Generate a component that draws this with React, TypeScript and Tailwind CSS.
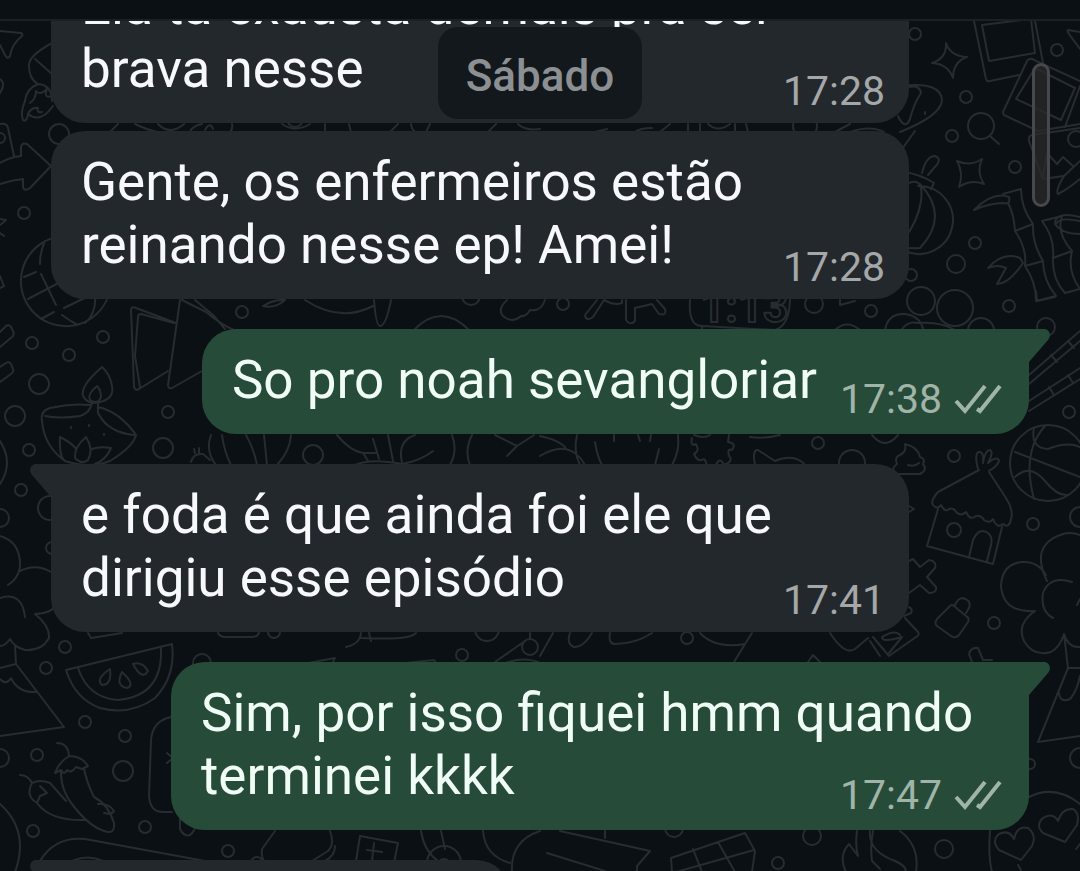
type Message = {
  id: number
  text: string
  time: string
  sent?: boolean
  tail?: boolean
  spaced?: boolean
}

const messages: Message[] = [
  { id: 1, text: 'Ela tá exausta demais pra ser brava nesse', time: '17:28' },
  { id: 2, text: 'Gente, os enfermeiros estão reinando nesse ep! Amei!', time: '17:28' },
  { id: 3, text: 'So pro noah sevangloriar', time: '17:38', sent: true, tail: true, spaced: true },
  { id: 4, text: 'e foda é que ainda foi ele que dirigiu esse episódio', time: '17:41', tail: true, spaced: true },
  { id: 5, text: 'Sim, por isso fiquei hmm quando terminei kkkk', time: '17:47', sent: true, tail: true, spaced: true },
]

// [cx, cy, r]
const dots = [
  [915, 33, 6], [966, 96, 6], [952, 135, 6], [1015, 166, 6], [1057, 49, 6], [975, 242, 6],
  [911, 274, 6], [956, 263, 9], [1009, 305, 6], [921, 300, 14], [955, 307, 18], [1076, 138, 8],
  [59, 133, 10], [0, 137, 5], [24, 212, 6], [32, 342, 6], [69, 354, 6], [39, 383, 10],
  [15, 415, 10], [29, 449, 6], [242, 311, 6], [103, 336, 6], [168, 411, 6], [163, 447, 10],
  [21, 489, 6], [0, 517, 9], [50, 507, 12], [52, 547, 6], [313, 454, 10], [563, 303, 6],
  [814, 303, 9], [871, 310, 6], [981, 330, 13], [1046, 326, 9], [1069, 411, 6], [954, 455, 6],
  [818, 442, 6], [852, 462, 13], [1033, 523, 6], [1080, 516, 10], [994, 622, 6], [954, 529, 7],
  [65, 646, 6], [46, 667, 6], [85, 721, 6], [125, 735, 6], [37, 754, 6], [0, 757, 9],
  [123, 770, 10], [33, 830, 6], [145, 826, 6], [228, 850, 6], [462, 654, 6], [530, 646, 8],
  [202, 662, 9], [687, 637, 6], [274, 631, 6], [1080, 757, 10], [1030, 763, 5], [944, 848, 9],
  [812, 835, 9], [778, 862, 6], [981, 125, 13], [487, 628, 12], [444, 862, 17],
  [444, 864, 6], [295, 118, 8], [674, 827, 9], [257, 862, 6], [805, 125, 12], [471, 295, 9],
]

const doodles = [
  // stars, magnifier
  'M946 42Q950 55 967 56Q953 61 953 77Q948 63 932 62Q947 57 946 42Z',
  'M957 160Q970 166 982 158Q976 171 984 183Q971 178 959 186Q964 172 957 160Z',
  'M990 135L999 143',
  // polaroids
  'M974 20L986 78Q987 81 990 80L1019 74M1035 20L1043 62M982 24L1031 18L1035 52L989 60Z',
  'M1080 80L1032 58Q1029 57 1027 60L1003 111Q1003 114 1006 115L1038 130L1080 123M1035 67L1075 87L1061 119L1016 98Z',
  'M1080 85L1065 126M1080 127L1032 134Q1028 135 1029 140L1043 178L1063 175M1043 175L1047 152L1057 163L1063 156L1073 165',
  'M1058 193Q1055 190 1064 175L1080 160M1058 193Q1068 188 1080 178M1080 31L1068 29Q1067 30 1069 33L1080 48',
  // guitar and bauble
  'M900 85Q942 80 942 100Q940 115 900 131M909 86Q920 84 921 92Q914 102 910 118Q905 130 898 115M915 130L902 148M925 111v2',
  'M918 185A34 34 0 1 1 905 250M920 183Q950 215 920 247Q912 248 900 246M909 182Q924 176 921 200Q918 220 904 238',
  'M900 170Q920 173 934 182L931 188M922 172Q926 155 935 155Q943 158 934 167L928 174',
  // bamboo
  'M1003 193L1021 188Q1021 207 1033 223Q1032 242 1043 260Q1043 279 1056 295L1036 300Q1036 281 1025 265Q1027 247 1015 230Q1014 213 1008 202M1015 230L1033 223M1025 265L1043 260',
  'M974 209Q993 190 1009 196Q1011 204 1003 202Q990 202 974 209ZM988 267Q1003 250 1020 257L1023 262Q1009 283 997 283L1006 267Q998 263 988 267Z',
  'M1042 220L1062 215Q1056 232 1072 250Q1067 270 1080 288M1042 220Q1055 237 1053 257Q1052 278 1065 292L1080 288M1053 257L1072 250M1080 216Q1055 210 1055 223Q1062 233 1080 233M1080 220Q1060 216 1057 222',
  // paper plane, rocket, tag, arrow
  'M0 30L21 32Q24 33 21 36Q12 43 10 55Q8 59 5 54L0 44M0 78Q6 82 0 92',
  'M52 42Q28 55 29 65Q29 78 38 83M35 58L52 73M38 83Q26 88 25 100Q20 112 23 119Q27 121 28 113Q40 123 53 105M38 83Q52 84 52 100M30 102Q36 98 36 90Q40 95 47 88Q43 98 52 95M28 113Q31 106 38 107Q36 112 42 111',
  'M0 123Q7 122 8 127L14 155M0 162Q10 156 21 155V146Q22 141 27 143L51 165L30 187Q24 191 23 186V178Q12 179 0 183',
  'M0 218L6 219L0 224M0 232L4 235M0 275L4 285L0 287',
  // globe
  'M57 236A45 45 0 1 0 108 296M40 263Q40 250 45 240M36 271L24 276M28 298L70 276M41 273L56 304M54 311L41 318M64 307L95 292M62 314Q70 320 78 324M95 292Q97 312 85 322',
  // chalk sticks
  'M0 331L6 325Q9 323 11 326L13 330Q15 333 12 336L0 346M0 366L6 362Q9 360 11 363L13 368Q14 371 11 373L0 381',
  // folded card
  'M176 322L136 307Q131 305 131 309L134 386Q135 390 139 388L168 370M174 322L141 313Q138 313 138 316L135 355L140 386',
  'M180 299L168 384Q168 388 172 387L202 370M182 299L206 311Q220 323 234 329M195 299L213 314L225 328',
  // oil lamp
  'M102 366Q80 385 83 395Q87 402 94 402Q115 400 112 385Q110 373 102 366ZM97 385Q87 393 90 399Q98 404 101 396Q101 389 97 385Z',
  'M92 402Q90 412 80 415Q60 418 45 415M90 404Q70 402 50 407Q40 410 42 420Q44 445 65 460Q90 468 110 460Q133 446 136 434Q120 411 98 406L98 412Q108 432 135 434M98 402V410',
  'M60 436Q72 442 76 448M60 436Q59 456 65 460M86 436Q74 446 75 457Q82 464 88 459Q94 448 86 436M92 448Q100 445 111 447Q106 459 95 463M71 426v1M89 424v1M104 433v1',
  // between the rows
  'M110 131L118 123M135 123Q150 130 158 131M158 123Q170 135 184 123M190 131Q192 125 202 123M205 129Q210 120 213 128M232 123Q233 128 230 131M282 123Q295 132 310 123M325 123V131M349 123L351 131M390 131L398 123M411 123Q412 130 416 131M430 123L426 131M488 131L496 123M518 123Q525 130 540 128',
  'M595 131L607 128M635 131Q640 127 652 127M660 131L670 123M688 123V131M700 123V131M708 123Q718 132 730 123M735 123V131M746 123L748 131M835 131L850 123M850 131Q870 124 884 131',
  'M263 305Q275 298 285 299M263 305Q275 308 285 299M305 299Q340 322 373 305M374 299Q376 325 380 325Q386 325 391 299M413 330Q441 300 470 330',
  'M507 299Q497 308 503 315Q512 323 521 315Q526 316 530 309Q541 311 545 299',
  'M597 299L585 314Q586 321 593 316L604 299M604 299Q615 305 622 302V299M626 299V319Q630 325 635 320V307L652 303L659 313Q667 315 665 308L657 299',
  'M690 299Q688 325 702 325L775 329Q789 325 790 299M702 325V331M835 329Q847 318 860 329M840 299V304L855 300',
  'M885 329Q888 312 905 313Q920 315 923 328M902 328Q908 320 918 322Q940 320 955 329M1036 290L1037 300L1055 296',
  'M211 434Q205 450 216 464M222 434Q224 450 231 464M246 434Q254 448 257 464M264 434L267 464M291 434Q290 450 277 464M191 461Q193 452 203 453L210 459M195 452L194 448M199 452V447',
  'M337 434Q350 450 363 452H376M363 452L368 460M373 438L379 458M388 434L393 460M355 464Q370 457 402 463M402 462Q397 440 415 434M402 463Q420 460 433 450M452 434Q458 450 450 464M472 434Q464 450 470 464M495 434L517 445L507 455M517 445L534 434',
  'M540 435Q562 440 566 448M540 455Q570 437 585 464M577 434Q573 450 580 464M595 441Q597 455 602 464M614 434V440M638 434L640 440M651 434L650 440M678 434Q680 450 672 464M659 448L655 464',
  'M692 437Q690 446 696 443Q700 450 694 453Q698 462 704 458Q708 462 706 467M716 464Q720 455 724 464Q734 460 729 455Q727 447 732 449Q737 442 728 441L729 434M694 434Q704 438 710 434M755 464Q752 448 758 449L775 460Q795 452 805 464M750 436Q765 438 780 434M872 434Q885 450 898 434',
  // swirl
  'M905 443Q907 451 900 454Q894 456 897 463Q890 468 896 473H920Q928 469 923 463Q926 458 920 456Q918 446 905 443M908 464Q915 466 919 462',
  // chopsticks
  'M1029 374L1080 330M1029 383L1080 340M1051 354L1057 361M1068 340L1074 347M1029 400L1080 367M1029 410L1080 378M1049 386L1054 394M1068 374L1073 382',
  // basketball
  'M1010 462A38 38 0 1 0 1086 462A38 38 0 1 0 1010 462M1015 451L1080 476M1034 427Q1030 447 1048 448Q1067 440 1080 446M1046 424Q1021 450 1034 498M1015 476Q1030 462 1045 480Q1057 495 1068 494',
  // hut
  'M979 469L938 491Q930 500 933 504Q937 509 941 504Q945 512 949 508Q954 506 956 511Q961 516 966 511Q970 520 976 515Q981 514 984 519Q990 523 993 518Q997 528 1003 523Q1009 528 1011 518Q1014 510 1006 497L989 471',
  'M938 508L927 545L993 563L1002 526M969 556L973 539Q979 526 988 532Q993 536 991 544L987 560M978 468Q974 452 979 451Q984 450 983 462Q985 449 990 449Q994 451 988 462Q996 455 999 459Q999 464 989 470',
  // cross, padlock, parts
  'M909 560L913 558L920 566L929 559Q937 560 935 567L927 576L936 586Q937 592 929 592L920 584L909 592M909 505L914 508L909 511M909 606Q913 608 911 612L904 615M905 617L918 631Q920 634 916 636L889 655L873 636M880 655L870 640M889 652L902 636Q882 642 882 636Q895 628 900 634',
  'M950 605L937 618Q934 622 937 625L951 635Q955 638 959 634L968 621Q970 617 966 615L954 605Q952 603 950 605ZM955 604Q958 597 963 597Q972 600 969 607L966 612M972 661L969 653Q971 646 978 647L983 659H992',
  // trees
  'M1047 580Q1030 545 1060 534Q1070 530 1080 534M1046 574Q1038 560 1022 561Q1002 563 1001 585Q1003 612 1035 610Q1016 623 1024 640Q1033 656 1051 651Q1060 646 1064 633L1068 667L1038 741L1080 735M1064 633Q1068 647 1080 646M1072 581Q1050 574 1043 592Q1040 610 1053 617M1068 667H1080M1080 598L1077 604M1059 692Q1060 702 1070 698Q1077 690 1080 675',
  'M0 535Q21 541 20 566Q18 578 8 584M20 570Q36 562 51 571M0 597Q22 590 25 616M35 613Q51 612 54 606M35 613Q50 625 49 637Q42 650 25 649Q14 646 10 638Q5 645 0 645M15 645L16 663L64 726L0 735M0 667L16 663M0 678Q6 685 11 677Q18 692 36 691M0 440Q14 462 0 483',
  // watermelon
  'M66 669L172 643Q176 675 155 697Q130 715 100 707Q75 698 66 669M78 667Q88 697 118 699Q163 695 161 647M110 668Q95 678 102 684Q112 684 110 668M122 671Q115 685 127 687Q136 684 122 671M133 663Q142 660 148 670Q142 680 133 663',
  // peppers
  'M57 742Q68 742 69 755Q59 761 55 772L61 769Q64 775 67 769Q71 773 76 766L82 768L88 765Q82 755 69 755M61 769Q60 790 75 807Q92 828 108 831Q115 832 114 822Q108 803 94 796Q86 780 84 767M20 774Q28 774 32 782Q40 778 50 782L66 800M32 782Q25 795 37 802Q50 820 85 819M37 802L40 795L47 792L40 785M98 803Q109 802 114 810Q112 814 104 812',
  'M0 803Q30 830 15 871M40 860Q55 835 85 838L205 860M72 860Q88 853 103 860M171 716Q152 720 151 740L149 795Q150 812 165 811H172M167 752L173 757L167 762M180 818V828Q184 836 190 834Q195 830 195 825',
  'M88 632L91 637L122 632M218 632Q220 636 226 636H252Q257 636 259 632M346 646Q360 643 361 632M369 632L371 640M361 637Q385 638 400 637Q412 636 416 632M308 662L335 657L332 663M405 662L434 659L437 663M495 661L525 640M505 662Q525 655 540 662M530 638V632',
  'M275 830L262 848Q261 856 264 860M330 830Q335 843 328 850L312 860M335 845Q335 855 325 860M356 860L360 835L398 842L394 862M374 842L372 860M367 849L382 851M421 830Q424 850 438 860M441 830L445 848M483 830Q485 855 510 862M512 871Q510 840 540 830',
  'M553 632L540 655M570 632Q566 643 574 646Q583 647 592 632M610 632Q608 643 615 643Q635 643 652 632M700 632Q715 648 745 643L752 632M745 643L734 661M808 661L813 654L820 661M830 632Q845 655 855 648L868 637',
  'M560 830L650 850L637 865V871M547 852L605 870M605 830V837M672 871L671 857L745 832L755 850L752 871M693 848L702 871M718 841L735 871M676 871L754 849M857 830Q855 845 858 855L849 843Q838 855 846 871M870 830Q868 850 895 860Q908 866 905 871M900 830Q920 845 916 871M873 830Q870 845 872 860L880 868',
  // balloon hearts
  'M1029 796Q1055 783 1080 803M990 830Q988 855 992 871M1021 869L1018 864M1080 843L1076 848',
  'M1021 859L999 849Q991 840 999 833Q1009 828 1014 838Q1017 824 1028 827Q1037 834 1032 845ZM1065 841L1043 832Q1035 824 1043 817Q1053 811 1058 820Q1062 807 1073 808Q1080 812 1077 824Z',
]

function Wallpaper() {
  return (
    <svg
      aria-hidden="true"
      viewBox="0 20 1080 851"
      preserveAspectRatio="xMidYMin slice"
      className="pointer-events-none absolute inset-0 h-full w-full fill-none stroke-[#282c30] stroke-2"
      strokeLinecap="round"
      strokeLinejoin="round"
    >
      {dots.map(([cx, cy, r], i) => (
        <circle key={i} cx={cx} cy={cy} r={r} />
      ))}
      {doodles.map((d) => (
        <path key={d} d={d} />
      ))}
      <text x="700" y="321" className="font-['Roboto'] text-[44px] font-bold">1:13</text>
    </svg>
  )
}

function Ticks() {
  return (
    <svg viewBox="0 0 48 32" className="h-8 w-12 fill-none stroke-current stroke-4" role="img" aria-label="Entregue">
      <path d="M2 18L11 28L31 3M23 26L26 28L46 3" />
    </svg>
  )
}

function Tail({ sent }: { sent?: boolean }) {
  return (
    <svg
      aria-hidden="true"
      viewBox="0 0 21 33"
      className={
        sent
          ? 'absolute top-0 left-full h-[33px] w-[21px] fill-[#274b39]'
          : 'absolute top-0 right-full h-[33px] w-[21px] -scale-x-100 fill-[#23282c]'
      }
    >
      <path d="M0 0H15C20 0 23 6 19 11L0 33Z" />
    </svg>
  )
}

function Bubble({ text, time, sent, tail, spaced }: Message) {
  const side = sent
    ? 'self-end bg-[#274b39] text-[#f0fdf6]'
    : 'self-start bg-[#23282c] text-[#f7f8fb]'
  const corner = tail ? (sent ? 'rounded-tr-none' : 'rounded-tl-none') : ''
  return (
    <li
      className={`relative max-w-[858px] rounded-[34px] pt-5 pb-[22px] pl-[30px] ${sent ? 'pr-7' : 'pr-6'} ${spaced ? 'mt-[30px]' : 'mt-2'} ${side} ${corner}`}
    >
      {tail && <Tail sent={sent} />}
      <p className="text-[53px] leading-[63px]">
        {text}
        <span aria-hidden="true" className={sent ? 'inline-block w-[184px]' : 'inline-block w-[124px]'} />
      </p>
      <div
        className={
          sent
            ? 'absolute right-[27px] bottom-3 flex items-center gap-3 text-[41px] leading-[46px] text-[#a0b4a8]'
            : 'absolute right-6 bottom-[9px] text-[41px] leading-[46px] text-[#a5a7a9]'
        }
      >
        <time>{time}</time>
        {sent && <Ticks />}
      </div>
    </li>
  )
}

export default function App() {
  return (
    <div className="flex h-screen flex-col overflow-hidden bg-[#0a1014] font-['Roboto','Noto_Sans',sans-serif]">
      <header className="h-[21px] shrink-0 border-b-2 border-[#1b2024]" />
      <main className="relative flex-1 overflow-hidden">
        <Wallpaper />
        <ul className="relative -mt-[74px] flex flex-col px-[51px]">
          {messages.map((message) => (
            <Bubble key={message.id} {...message} />
          ))}
          <li className="relative mt-[30px] h-[105px] w-[459px] max-w-full self-start rounded-[34px] rounded-tl-none bg-[#23282c]">
            <Tail />
          </li>
        </ul>
        <div className="absolute inset-x-0 top-[6px] flex justify-center">
          <span className="rounded-[20px] bg-[#13181c] px-7 pt-[25px] pb-[19px] text-[44px] leading-[48px] font-medium text-[#8c9092]">
            Sábado
          </span>
        </div>
        <div className="absolute top-[42px] right-[30px] h-36 w-[18px] rounded-full border-3 border-[#464849] bg-[#2a2a2d]/75" />
      </main>
    </div>
  )
}
